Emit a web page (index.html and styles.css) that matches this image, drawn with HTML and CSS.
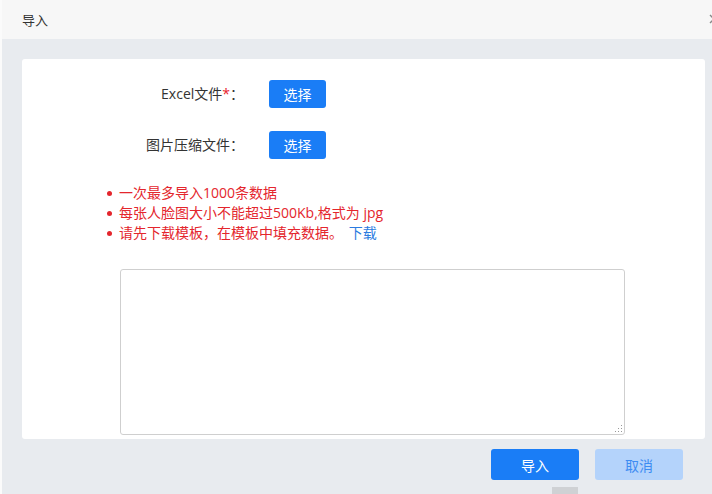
FILE: index.html
```html
<!DOCTYPE html>
<html lang="zh">
<head>
<meta charset="utf-8">
<title>导入</title>
<link rel="stylesheet" href="styles.css">
</head>
<body>
<div class="dialog">
  <div class="header">
    <span class="title">导入</span>
    <svg class="close" width="10" height="12" viewBox="0 0 10 12"><path d="M8 2 L16 10 M16 2 L8 10" stroke="#888" stroke-width="1.4" fill="none"/></svg>
  </div>
  <div class="main">
    <div class="card">
      <div class="row">
        <span class="label">Excel文件<span class="req">*</span>：</span>
        <button class="btn-pick">选择</button>
      </div>
      <div class="row row2">
        <span class="label">图片压缩文件：</span>
        <button class="btn-pick">选择</button>
      </div>
      <ul class="tips">
        <li>一次最多导入1000条数据</li>
        <li>每张人脸图大小不能超过500Kb,格式为 jpg</li>
        <li>请先下载模板，在模板中填充数据。 <a class="dl">下载</a></li>
      </ul>
      <div class="area-wrap">
        <textarea class="area"></textarea>
      </div>
    </div>
    <div class="footer">
      <button class="btn-ok">导入</button>
      <button class="btn-cancel">取消</button>
    </div>
    <div class="nub"></div>
  </div>
</div>
</body>
</html>
```

FILE: styles.css
```css
* { box-sizing: border-box; }
html, body {
  margin: 0;
  padding: 0;
  width: 712px;
  height: 494px;
  overflow: hidden;
  background: #ffffff;
  font-family: "Open Sans", "Noto Sans CJK SC", sans-serif;
}
.dialog {
  width: 712px;
  height: 494px;
  padding-left: 2px;
  display: flex;
  flex-direction: column;
  background: #fbfbfb;
}
.header {
  height: 39px;
  flex: none;
  background: #f7f7f7;
  display: flex;
  align-items: center;
  justify-content: space-between;
  padding-left: 20px;
  font-size: 13px;
  color: #333;
}
.title { font-family: "Noto Sans CJK SC", sans-serif; }
.close {
  display: block;
  margin-top: -2px;
}
.main {
  flex: 1;
  background: #e8ebef;
  position: relative;
  padding: 20px 7px 0 20px;
  display: flex;
  flex-direction: column;
}
.card {
  height: 380px;
  background: #fff;
  border-radius: 3px;
  padding-top: 21px;
  display: flex;
  flex-direction: column;
  overflow: hidden;
}
.row {
  display: flex;
  align-items: center;
  height: 28px;
}
.row2 { margin-top: 23px; }
.label {
  width: 222px;
  text-align: right;
  font-size: 14px;
  color: #333;
  margin-right: 25px;
  margin-top: -2px;
  font-family: "Open Sans", "Noto Sans CJK SC", sans-serif;
}
.req { color: #e8202a; }
.btn-pick {
  width: 57px;
  height: 28px;
  border: none;
  border-radius: 3px;
  background: #1a7df6;
  color: #fff;
  font-size: 14px;
  font-family: "Noto Sans CJK SC", sans-serif;
  padding: 0;
}
.tips {
  margin: 24px 0 0 0;
  padding-left: 97px;
  list-style: none;
  font-size: 14px;
  line-height: 20px;
  color: #e4262d;
  font-family: "Open Sans", "Noto Sans CJK SC", sans-serif;
}
.tips li {
  position: relative;
}
.tips li::before {
  content: "";
  position: absolute;
  left: -12px;
  top: 8px;
  width: 5px;
  height: 5px;
  border-radius: 50%;
  background: #e4262d;
}
.dl { color: #2b7be0; margin-left: 2px; }
.area-wrap {
  position: relative;
  margin: 26px 0 0 98px;
  width: 505px;
  height: 166px;
  flex: none;
}
.area {
  display: block;
  width: 100%;
  height: 100%;
  border: 1px solid #cfcfcf;
  border-radius: 3px;
  resize: none;
  background: #fff;
}
.area-wrap::after {
  content: "";
  position: absolute;
  right: 3px;
  bottom: 3px;
  width: 8px;
  height: 8px;
  background-image: radial-gradient(circle, #999 0.8px, transparent 1px);
  background-size: 3px 3px;
  clip-path: polygon(100% 0, 100% 100%, 0 100%);
}
.footer {
  display: flex;
  justify-content: flex-end;
  gap: 16px;
  margin-top: 10px;
  padding-right: 22px;
}
.btn-ok, .btn-cancel {
  width: 88px;
  height: 31px;
  border: none;
  border-radius: 3px;
  font-size: 14px;
  font-family: "Noto Sans CJK SC", sans-serif;
  padding: 0;
}
.btn-ok { background: #1a7df6; color: #fff; }
.btn-cancel { background: #b4d3fb; color: #3d8cf2; }
.nub {
  position: absolute;
  left: 550px;
  bottom: 0;
  width: 26px;
  height: 7px;
  background: #cfd1d4;
}
```
